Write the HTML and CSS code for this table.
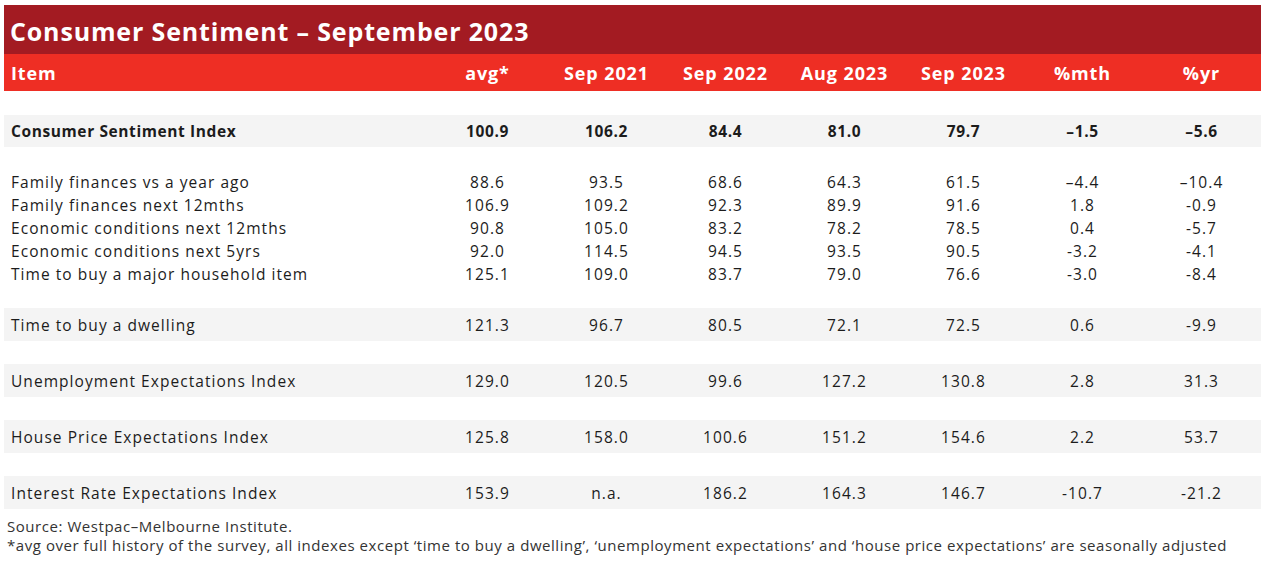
FILE: index.html
```html
<!DOCTYPE html>
<html lang="en">
<head>
<meta charset="utf-8">
<title>Consumer Sentiment – September 2023</title>
<link rel="stylesheet" href="styles.css">
</head>
<body>
<div class="page">
  <div class="title">Consumer Sentiment – September 2023</div>
  <table class="data">
    <colgroup>
      <col class="c-item"><col class="c-num"><col class="c-num"><col class="c-num"><col class="c-num"><col class="c-num"><col class="c-num"><col class="c-num">
    </colgroup>
    <thead>
      <tr class="head">
        <th class="item">Item</th><th>avg*</th><th>Sep 2021</th><th>Sep 2022</th><th>Aug 2023</th><th>Sep 2023</th><th>%mth</th><th>%yr</th>
      </tr>
    </thead>
    <tbody>
      <tr class="gap g24"><td colspan="8"></td></tr>
      <tr class="shade bold">
        <td class="item">Consumer Sentiment Index</td><td>100.9</td><td>106.2</td><td>84.4</td><td>81.0</td><td>79.7</td><td>–1.5</td><td>–5.6</td>
      </tr>
      <tr class="gap"><td colspan="8"></td></tr>
      <tr class="sub"><td class="item">Family finances vs a year ago</td><td>88.6</td><td>93.5</td><td>68.6</td><td>64.3</td><td>61.5</td><td>–4.4</td><td>–10.4</td></tr>
      <tr class="sub"><td class="item">Family finances next 12mths</td><td>106.9</td><td>109.2</td><td>92.3</td><td>89.9</td><td>91.6</td><td>1.8</td><td>-0.9</td></tr>
      <tr class="sub"><td class="item">Economic conditions next 12mths</td><td>90.8</td><td>105.0</td><td>83.2</td><td>78.2</td><td>78.5</td><td>0.4</td><td>-5.7</td></tr>
      <tr class="sub"><td class="item">Economic conditions next 5yrs</td><td>92.0</td><td>114.5</td><td>94.5</td><td>93.5</td><td>90.5</td><td>-3.2</td><td>-4.1</td></tr>
      <tr class="sub"><td class="item">Time to buy a major household item</td><td>125.1</td><td>109.0</td><td>83.7</td><td>79.0</td><td>76.6</td><td>-3.0</td><td>-8.4</td></tr>
      <tr class="gap"><td colspan="8"></td></tr>
      <tr class="shade"><td class="item">Time to buy a dwelling</td><td>121.3</td><td>96.7</td><td>80.5</td><td>72.1</td><td>72.5</td><td>0.6</td><td>-9.9</td></tr>
      <tr class="gap"><td colspan="8"></td></tr>
      <tr class="shade"><td class="item">Unemployment Expectations Index</td><td>129.0</td><td>120.5</td><td>99.6</td><td>127.2</td><td>130.8</td><td>2.8</td><td>31.3</td></tr>
      <tr class="gap"><td colspan="8"></td></tr>
      <tr class="shade"><td class="item">House Price Expectations Index</td><td>125.8</td><td>158.0</td><td>100.6</td><td>151.2</td><td>154.6</td><td>2.2</td><td>53.7</td></tr>
      <tr class="gap"><td colspan="8"></td></tr>
      <tr class="shade"><td class="item">Interest Rate Expectations Index</td><td>153.9</td><td>n.a.</td><td>186.2</td><td>164.3</td><td>146.7</td><td>-10.7</td><td>-21.2</td></tr>
    </tbody>
  </table>
  <div class="notes">
    <p>Source: Westpac–Melbourne Institute.</p>
    <p>*avg over full history of the survey, all indexes except ‘time to buy a dwelling’, ‘unemployment expectations’ and ‘house price expectations’ are seasonally adjusted</p>
  </div>
</div>
</body>
</html>
```
FILE: styles.css
```css
html, body {
  margin: 0;
  padding: 0;
  background: #ffffff;
}
body {
  font-family: "Open Sans", "Liberation Sans", sans-serif;
  color: #1c1c1c;
}
.page {
  padding: 5px 3px 0 4px;
}
.title {
  background: #a31b22;
  color: #ffffff;
  font-weight: 700;
  font-size: 25px;
  letter-spacing: 0.85px;
  height: 49px;
  line-height: 52px;
  padding-left: 6px;
  white-space: nowrap;
}
.data {
  width: 1257px;
  border-collapse: collapse;
  table-layout: fixed;
}
.c-item { width: 424px; }
.c-num { width: 119px; }
.data th, .data td {
  padding: 0;
  text-align: center;
  white-space: nowrap;
}
.data .item {
  text-align: left;
  padding-left: 7px;
}
.head th {
  background: #ee2e24;
  color: #ffffff;
  font-weight: 700;
  font-size: 18px;
  letter-spacing: 0.9px;
  height: 37px;
}
.gap td { height: 23px; }
.gap.g24 td { height: 24px; }
.shade td, .sub td {
  font-size: 15.5px;
  letter-spacing: 1.05px;
}
.shade td {
  background: #f4f4f4;
  height: 33px;
}
.shade.bold td {
  height: 32px;
  font-weight: 700;
  letter-spacing: 0.6px;
}
.sub td {
  height: 23px;
}
.notes {
  margin-top: 8px;
  padding-left: 3px;
  color: #333333;
  font-size: 15px;
  letter-spacing: 0.55px;
  line-height: 19px;
}
.notes p { margin: 0; }
```
